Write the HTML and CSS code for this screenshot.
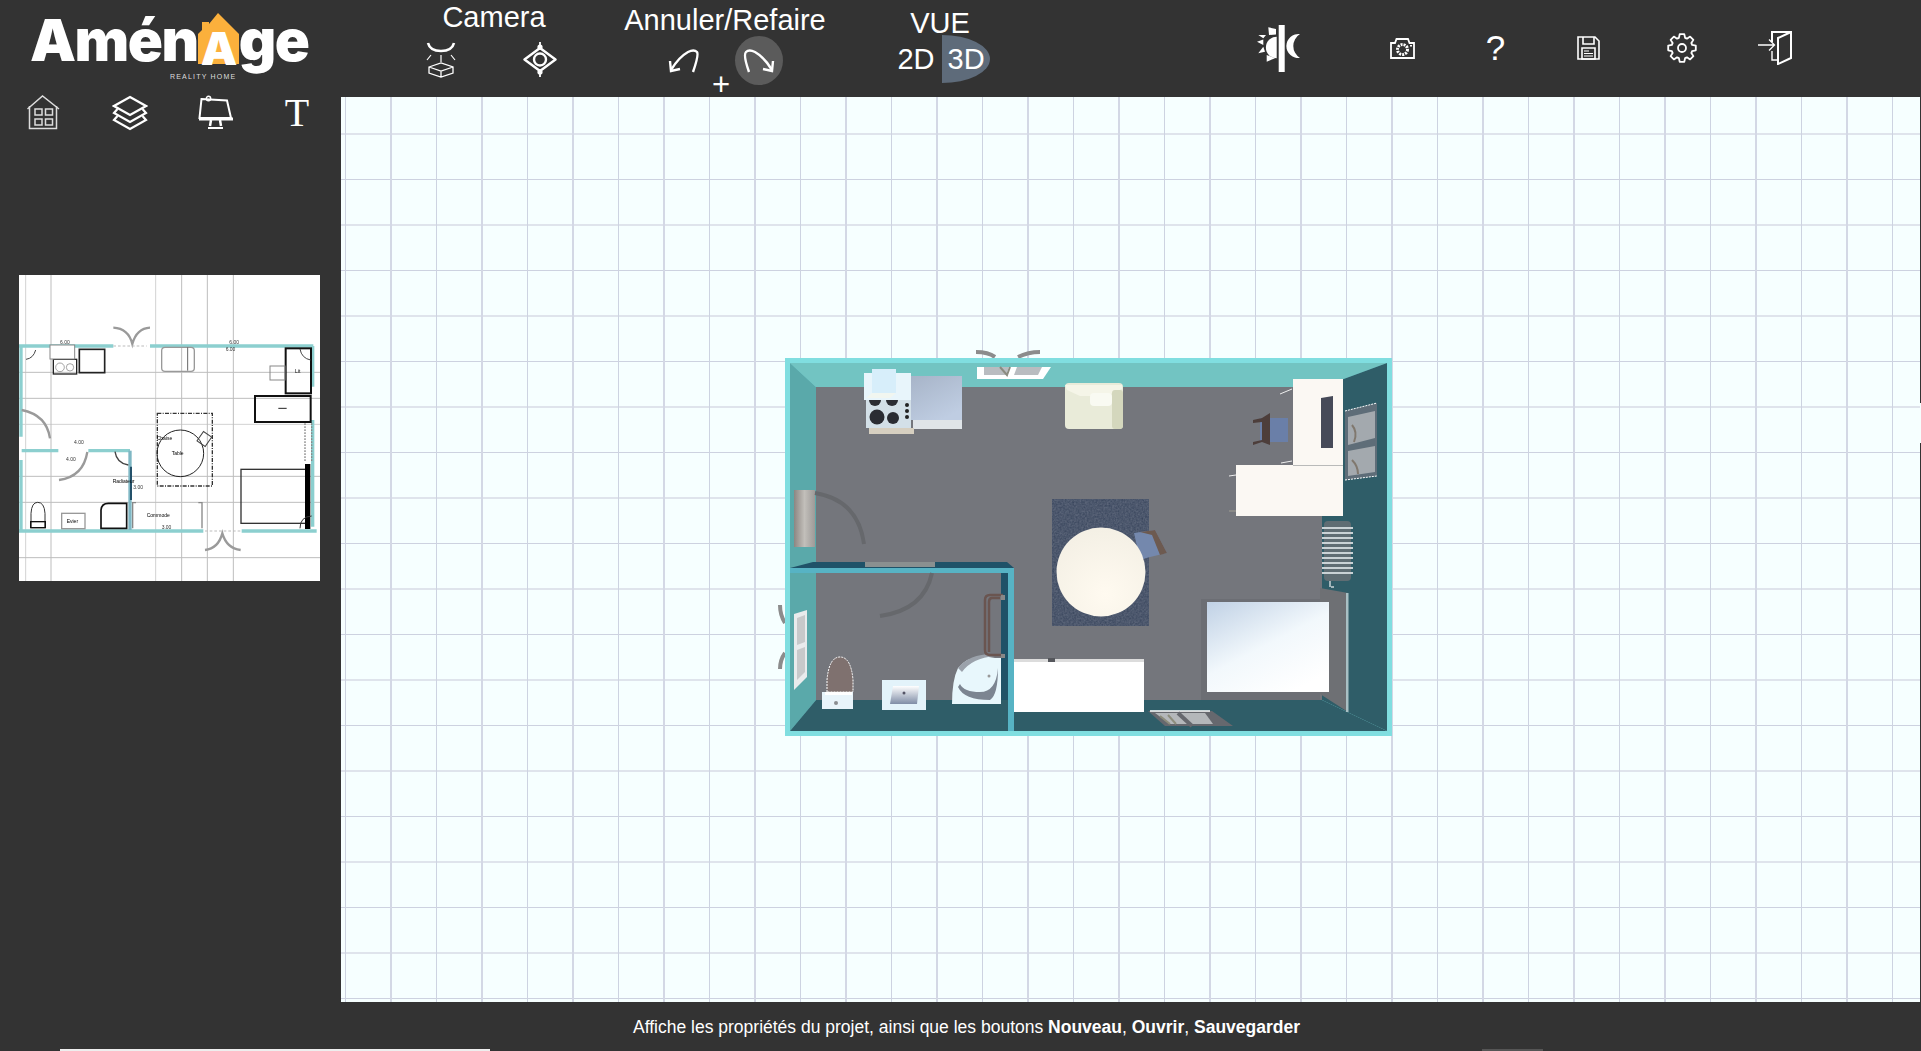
FILE: index.html
```html
<!DOCTYPE html>
<html lang="fr">
<head>
    <meta charset="UTF-8">
    <meta name="viewport" content="width=device-width, initial-scale=1.0">
    <title>AménAge</title>
    <link rel="stylesheet" href="styles.css">
</head>
<body>
    <header class="topbar">
        <div class="logo">
            <span class="logo-text">Amén</span>
            <span class="logo-house">
                <svg width="42" height="52" viewBox="200 14 42 52"><path d="M220 14 L241 35 V65 H200 V35 L204 31 V23 H211 V25Z" fill="#fbb03c"/></svg>
                <span class="logo-a">A</span>
            </span>
            <span class="logo-text">ge</span>
            <span class="logo-sub">REALITY HOME</span>
        </div>

        <div class="group group-camera">
            <div class="group-title">Camera</div>
            <div class="group-icons">
                <button class="icon-btn">
                    <svg width="32" height="36" viewBox="0 0 32 36" fill="none" stroke="#fff"><path d="M3 1 Q5 9 16 9 Q27 9 29 1" stroke-width="2.6"/><path d="M6 13 L2 18 M26 13 L30 18 M16 13 V20" stroke-width="1.2"/><path d="M4 25 L16 21 L28 25 V31 L16 35 L4 31Z M4 25 L16 29 L28 25 M16 29 V35" stroke-width="1.3"/></svg>
                </button>
                <button class="icon-btn">
                    <svg width="34" height="35" viewBox="0 0 34 35" fill="none" stroke="#fff"><path d="M1.5 17.5 L17 6 L32.500 17.5 L17 29Z" stroke-width="2.4" stroke-linejoin="round"/><circle cx="17" cy="17.5" r="6" stroke-width="2.4"/><path d="M17 0 V8 M17 27 V35" stroke-width="1.800"/><circle cx="17" cy="5" r="2.6" fill="#fff" stroke="none"/><circle cx="17" cy="30" r="2.6" fill="#fff" stroke="none"/></svg>
                </button>
            </div>
        </div>

        <div class="group group-undo">
            <div class="group-title">Annuler/Refaire</div>
            <div class="group-icons">
                <button class="icon-btn">
                    <svg width="32" height="24" viewBox="0 0 32 24" fill="none" stroke="#fff" stroke-width="2.4"><path d="M25 23 Q31 6 29 3 Q26 0 20 3 Q11 8 3 21"/><path d="M2 12 L3 22 L12 20"/></svg>
                </button>
                <span class="plus">+</span>
                <button class="icon-btn icon-active">
                    <svg width="32" height="24" viewBox="0 0 32 24" fill="none" stroke="#fff" stroke-width="2.4"><path d="M6 23 Q0 6 3 3 Q6 0 12 3 Q21 8 29 21"/><path d="M30 12 L29 22 L20 20"/></svg>
                </button>
            </div>
        </div>

        <div class="group group-view">
            <div class="group-title">VUE</div>
            <div class="view-switch">
                <span class="view-2d">2D</span>
                <span class="view-3d">3D</span>
            </div>
        </div>

        <div class="tools">
            <button class="tool tool-theme">
                <svg width="46" height="47" viewBox="-1 0 46 47" fill="#fff"><rect x="21.700" y="0" width="6" height="47"/><path d="M19.700 11.700 A10.800 10.800 0 0 0 19.700 33.300Z"/><path d="M11.300 2.300 L19 4 V9.500 L12 10Z M1.300 10 L6.300 13.300 L9 10Z M0 16.700 L6.300 14.500 V20Z M1.300 28.300 L6.300 21.700 L8 26.700Z M9.700 36.700 V30 L18 33.300Z"/><path d="M43 9 A12.100 12.100 0 1 0 43 33 A14.100 14.100 0 0 1 43 9Z"/></svg>
            </button>
            <button class="tool">
                <svg width="25" height="21" viewBox="0 0 25 21" fill="none" stroke="#fff"><path d="M1 5 H5 L6.500 1 H18 L19.500 5 H24 V20 H1Z" stroke-width="1.800"/><circle cx="12.500" cy="11.500" r="5" stroke-width="3" stroke-dasharray="2 1"/><rect x="20" y="7" width="2" height="1.500" fill="#fff" stroke="none"/></svg>
            </button>
            <button class="tool tool-help">?</button>
            <button class="tool">
                <svg width="23" height="24" viewBox="0 0 23 24" fill="none" stroke="#fff" stroke-width="1.600"><path d="M1 1 H18 L22 5 V23 H1Z"/><path d="M6 1 V8 H17 V1"/><path d="M5 12 H18 V23 H5Z"/><path d="M7 15 H12 M7 17.500 H16 M7 20 H16" stroke-width="1.200"/></svg>
            </button>
            <button class="tool">
                <svg width="30" height="30" viewBox="-15 -15 30 30" fill="none" stroke="#fff" stroke-width="1.800" stroke-linejoin="round">
                    <defs><path id="tooth" d="M-4.200 -9.700 L-3.100 -10.100 L-2.300 -13.800 L2.300 -13.800 L3.100 -10.100 L4.200 -9.700"/></defs>
                    <use href="#tooth"/>
                    <use href="#tooth" transform="rotate(45)"/>
                    <use href="#tooth" transform="rotate(90)"/>
                    <use href="#tooth" transform="rotate(135)"/>
                    <use href="#tooth" transform="rotate(180)"/>
                    <use href="#tooth" transform="rotate(225)"/>
                    <use href="#tooth" transform="rotate(270)"/>
                    <use href="#tooth" transform="rotate(315)"/>
                    <circle r="4"/>
                </svg>
            </button>
            <button class="tool">
                <svg width="34" height="34" viewBox="0 0 34 34" fill="none" stroke="#fff"><path d="M14 11 V1 H33 V27 L20 33 V7 L33 1" stroke-width="2"/><path d="M14 20 V29 H20" stroke-width="1.400"/><path d="M0 14 H16 M11 8.500 L16.500 14 L11 19.500" stroke-width="1.300"/></svg>
            </button>
        </div>
    </header>

    <div class="main">
        <aside class="sidebar">
            <div class="side-tools">
                <button class="side-btn">
                    <svg width="36" height="36" viewBox="0 0 36 36" fill="none" stroke="#ddd" stroke-width="1.500"><path d="M1.500 14 L16.500 1 L33 14"/><path d="M3.500 11 V33.500 H30.500 V11"/><rect x="9" y="14" width="7" height="6"/><rect x="19.500" y="14" width="7" height="6"/><rect x="9" y="24" width="7" height="6"/><rect x="19.500" y="24" width="7" height="6"/></svg>
                </button>
                <button class="side-btn">
                    <svg width="36" height="36" viewBox="0 0 36 36" fill="none" stroke="#fff" stroke-width="2.200"><path d="M18 2 L34 11 L18 20 L2 11Z"/><path d="M5.500 14 L2 18 L18 27 L34 18 L30.500 14"/><path d="M5.500 21 L2 25 L18 34 L34 25 L30.500 21"/></svg>
                </button>
                <button class="side-btn">
                    <svg width="36" height="36" viewBox="0 0 36 36" fill="none" stroke="#fff"><path d="M3.500 4 L29 5.500 L33 23 H1.500 Z" stroke-width="2"/><path d="M1 24 H35" stroke-width="3"/><path d="M13 25 L12 31 M22 25 L23 31" stroke-width="2.500"/><path d="M10 33 H25" stroke-width="2"/><circle cx="10.500" cy="3.500" r="2.200" stroke-width="1.400"/></svg>
                </button>
                <button class="side-btn side-text">T</button>
            </div>

            <div class="thumb">
                <svg class="thumb-plan" width="301" height="306" viewBox="57 45 903 918" fill="none">
                    <!-- lignes de la grille -->
                    <g stroke="#d2d2d2" stroke-width="3">
                        <path d="M77 45 V963 M467 45 V963 M57 493 H960"/>
                    </g>
                    <g stroke="#bdbdbd" stroke-width="3">
                        <path d="M153 45 V963 M545 45 V963 M622 45 V963 M700 45 V963 M57 337 H960 M57 415 H960 M57 649 H960 M57 727 H960 M57 893 H960"/>
                    </g>
                    <!-- murs -->
                    <g stroke="#8ccfcf" stroke-width="10">
                        <path d="M57 258 H340 M450 258 H940 M63 258 V530 M63 600 V812 M57 813 H610 M725 813 H950 M938 258 V380 M938 480 V800"/>
                        <path d="M65 572 H175 M265 572 H390"/>
                    </g>
                    <path d="M390 572 V810" stroke="#7fb7c4" stroke-width="10"/>
                    <path d="M393 620 V720" stroke="#24516a" stroke-width="6"/>
                    <!-- portes -->
                    <g stroke="#9a9a9a" stroke-width="7">
                        <path d="M340 203 Q385 205 397 252 Q410 205 450 203"/>
                        <path d="M615 870 Q655 865 667 820 Q680 865 722 870"/>
                        <path d="M65 450 Q140 465 150 535"/>
                        <path d="M262 576 Q250 650 177 660"/>
                    </g>
                    <path d="M340 258 H440 M615 813 H722" stroke="#bbb" stroke-width="3" stroke-dasharray="8 6"/>
                    <!-- cuisine -->
                    <rect x="160" y="298" width="70" height="44" stroke="#222" stroke-width="4"/>
                    <circle cx="180" cy="322" r="13" stroke="#777" stroke-width="2"/>
                    <circle cx="210" cy="322" r="11" stroke="#777" stroke-width="2"/>
                    <rect x="150" y="255" width="74" height="42" fill="#fff" stroke="#888" stroke-width="3"/>
                    <rect x="238" y="268" width="76" height="70" stroke="#222" stroke-width="5"/>
                    <!-- fauteuil -->
                    <rect x="485" y="262" width="98" height="72" rx="10" stroke="#999" stroke-width="4"/>
                    <path d="M563 262 V332" stroke="#666" stroke-width="3"/>
                    <!-- bureau -->
                    <rect x="857" y="265" width="76" height="135" stroke="#111" stroke-width="6"/>
                    <rect x="765" y="408" width="167" height="78" stroke="#111" stroke-width="6"/>
                    <rect x="810" y="318" width="45" height="42" stroke="#888" stroke-width="3"/>
                    <path d="M835 445 H860" stroke="#222" stroke-width="3"/>
                    <path d="M915 490 V605 M935 490 V605" stroke="#888" stroke-width="4" stroke-dasharray="5 4"/>
                    <!-- table et tapis -->
                    <rect x="472" y="460" width="165" height="218" stroke="#333" stroke-width="4" stroke-dasharray="12 4 3 4"/>
                    <circle cx="541" cy="580" r="70" stroke="#222" stroke-width="3"/>
                    <rect x="598" y="520" width="30" height="34" transform="rotate(35 613 537)" stroke="#444" stroke-width="3"/>
                    <!-- lit -->
                    <rect x="723" y="628" width="195" height="162" stroke="#333" stroke-width="4"/>
                    <rect x="915" y="612" width="16" height="195" fill="#000"/>
                    <!-- commode -->
                    <path d="M408 728 H398 V805 M595 728 H606 V805" stroke="#888" stroke-width="4"/>
                    <!-- salle de bain -->
                    <path d="M303 805 V750 Q305 730 325 730 H380 V805Z" stroke="#111" stroke-width="5"/>
                    <rect x="185" y="760" width="70" height="46" stroke="#999" stroke-width="4"/>
                    <path d="M93 803 V760 Q95 727 113 727 Q133 727 135 760 V803Z" stroke="#333" stroke-width="3"/>
                    <rect x="92" y="785" width="44" height="18" stroke="#111" stroke-width="4"/>
                    <path d="M345 575 Q350 610 385 615" stroke="#444" stroke-width="4"/>
                    <path d="M900 805 Q900 770 935 768" stroke="#333" stroke-width="3"/>
                    <path d="M900 267 Q905 295 932 300 M78 298 Q100 295 107 270" stroke="#444" stroke-width="3"/>
                    <!-- cotes -->
                    <g font-family="Liberation Sans, Arial, sans-serif" font-size="15" fill="#333">
                        <text x="180" y="252">6.00</text>
                        <text x="688" y="252">6.00</text>
                        <text x="677" y="274">6.00</text>
                        <text x="222" y="552">4.00</text>
                        <text x="198" y="602">4.00</text>
                        <text x="485" y="808">3.00</text>
                        <text x="400" y="686">3.00</text>
                        <text x="515" y="585" fill="#000">Table</text>
                        <text x="470" y="540" fill="#000">Chaise</text>
                        <text x="440" y="772" fill="#000">Commode</text>
                        <text x="338" y="668" fill="#000">Radiateur</text>
                        <text x="885" y="340" fill="#000">Lit</text>
                        <text x="200" y="790" fill="#000">Evier</text>
                    </g>
                </svg>
            </div>
        </aside>

        <section class="canvas">
            <svg class="plan" width="650" height="410" viewBox="770 340 650 410">
                <defs>
                    <filter id="grain" x="0" y="0" width="100%" height="100%" color-interpolation-filters="sRGB">
                        <feTurbulence type="fractalNoise" baseFrequency="0.55" numOctaves="2" seed="4"/>
                        <feColorMatrix values="0 0 0 0 0.22  0 0 0 0 0.27  0 0 0 0 0.36  1.4 0 0 0 -0.3"/>
                        <feComposite in2="SourceGraphic" operator="in" result="noise"/>
                        <feMerge><feMergeNode in="SourceGraphic"/><feMergeNode in="noise"/></feMerge>
                    </filter>
                    <linearGradient id="fridge" x1="0" y1="0" x2="0.6" y2="1"><stop offset="0" stop-color="#a7b4c8"/><stop offset="1" stop-color="#bfcde2"/></linearGradient>
                    <linearGradient id="mattress" x1="0" y1="0" x2="0.7" y2="1"><stop offset="0" stop-color="#c0d1e5"/><stop offset="0.55" stop-color="#f2f8fc"/><stop offset="1" stop-color="#fff"/></linearGradient>
                    <linearGradient id="sinkbowl" x1="0" y1="0" x2="0" y2="1"><stop offset="0" stop-color="#fff"/><stop offset="1" stop-color="#7f8da6"/></linearGradient>
                    <linearGradient id="doorgrey" x1="0" y1="0" x2="1" y2="0"><stop offset="0" stop-color="#8d8682"/><stop offset="0.5" stop-color="#c2bfba"/><stop offset="1" stop-color="#9d9a98"/></linearGradient>
                    <radialGradient id="tabletop" cx="0.55" cy="0.75" r="0.8"><stop offset="0" stop-color="#fffaf0"/><stop offset="1" stop-color="#f3efe4"/></radialGradient>
                </defs>

                <!-- portes qui depassent du mur -->
                <g fill="none" stroke="#8c8c8c" stroke-width="4">
                    <path d="M976 352 Q988 352 995 357 M1040 352 Q1028 352 1018 357"/>
                    <path d="M780 605 Q780 615 785 623 M780 669 Q780 660 785 653"/>
                </g>

                <!-- murs -->
                <rect x="785" y="358" width="607" height="378" fill="#80dee0"/>
                <path d="M790 363 H1387 L1322 387 H816Z" fill="#72c4c2"/>
                <path d="M790 363 L816 387 V700 L790 731Z" fill="#5aa9aa"/>
                <path d="M790 731 L816 700 H1322 L1387 731Z" fill="#2f5d68"/>
                <path d="M1387 363 L1322 387 V700 L1387 731Z" fill="#2f5d68"/>
                <rect x="816" y="387" width="506" height="313" fill="#74767c"/>

                <!-- cloison salle de bain -->
                <path d="M790 568 L813 562 H1007 L1014 568Z" fill="#1f5268"/>
                <rect x="865" y="562" width="70" height="5" fill="#8a9090"/>
                <rect x="790" y="568" width="224" height="5" fill="#57b3c4"/>
                <rect x="790" y="573" width="26" height="127" fill="#5aa9aa"/>
                <rect x="1001" y="573" width="7" height="127" fill="#1f5268"/>
                <rect x="1001" y="700" width="7" height="31" fill="#2f5d68"/>
                <rect x="1008" y="573" width="6" height="158" fill="#57b3c4"/>

                <!-- cuisine -->
                <rect x="911" y="376" width="51" height="44" fill="url(#fridge)"/>
                <rect x="913" y="420" width="49" height="9" fill="#dfe4e8"/>
                <rect x="869" y="428" width="45" height="6" fill="#d6cfc0"/>
                <rect x="866" y="400" width="45" height="28" fill="#d3e0e8"/>
                <circle cx="875" cy="400" r="6" fill="#2b2d33"/>
                <circle cx="892" cy="400" r="6" fill="#2b2d33"/>
                <circle cx="877" cy="417" r="7.500" fill="#2a2c33"/>
                <circle cx="893" cy="418" r="6" fill="#2a2c33"/>
                <circle cx="907" cy="405" r="2" fill="#222"/>
                <circle cx="907" cy="411" r="2" fill="#222"/>
                <circle cx="907" cy="417" r="2" fill="#222"/>
                <rect x="864" y="373" width="47" height="27" fill="#e8f5fb"/>
                <rect x="872" y="369" width="24" height="24" fill="#d7eefa"/>
                <path d="M872 393 H896 L890 398 H866Z" fill="#f1f6f0"/>

                <!-- fenetre du haut -->
                <path d="M977 367 H1051 L1043 379 H977Z" fill="#fff"/>
                <path d="M984 367 H1009 L1006 375 H984Z M1017 367 H1042 L1038 375 H1014Z" fill="#b9bcc0"/>
                <path d="M1000 367 L1007 375 L1010 367" fill="none" stroke="#8b8b80" stroke-width="2"/>

                <!-- fauteuil -->
                <rect x="1065" y="383" width="58" height="46" rx="4" fill="#e9ebd9"/>
                <path d="M1065 385 H1122 V389 L1106 396 H1080 L1067 390Z" fill="#f5f5e8"/>
                <rect x="1090" y="393" width="22" height="13" rx="4" fill="#f9faf2"/>
                <rect x="1112" y="390" width="11" height="39" rx="3" fill="#d4d7bd"/>

                <!-- porte entree et arcs -->
                <rect x="794" y="490" width="21" height="57" fill="url(#doorgrey)"/>
                <path d="M815 493 Q858 500 864 544" fill="none" stroke="#66686c" stroke-width="4"/>
                <path d="M932 573 Q924 610 880 616" fill="none" stroke="#66686c" stroke-width="4"/>

                <!-- tapis et table -->
                <rect x="1052" y="499" width="97" height="127" fill="#5a6478" filter="url(#grain)"/>
                <path d="M1134 533 L1155 530 L1167 553 L1150 557 L1140 560Z" fill="#7488ad"/>
                <path d="M1140 532 L1155 530 L1167 553 L1160 555 L1152 535Z" fill="#6d5a50"/>
                <circle cx="1101" cy="572" r="44.500" fill="url(#tabletop)"/>

                <!-- bureau -->
                <rect x="1293" y="379" width="50" height="86" fill="#fbf8f3"/>
                <rect x="1236" y="465" width="107" height="51" fill="#fbf8f3"/>
                <rect x="1293" y="465" width="50" height="1" fill="#b9bab9"/>
                <path d="M1321 398 L1333 396 V448 L1321 448Z" fill="#464a58"/>
                <rect x="1260" y="418" width="28" height="24" fill="#6a7fa8"/>
                <path d="M1253 420 L1262 418 L1270 413 V445 L1262 442 L1253 445 V442 L1262 440 V422 L1253 423Z" fill="#4d3e3b"/>
                <path d="M1280 394 L1292 389 M1281 463 L1292 461 M1229 476 L1236 475" stroke="#eee" stroke-width="1"/>
                <path d="M1229 511 H1236" stroke="#8a8a88" stroke-width="2"/>

                <!-- fenetre droite -->
                <path d="M1345 411 L1377 403 V476 L1345 480Z" fill="#5e6d78"/>
                <path d="M1348 417 L1375 411 V438 L1348 445Z M1348 451 L1375 446 V472 L1348 476Z" fill="#a3a9ae"/>
                <path d="M1345 411 L1377 403 M1345 480 L1377 476" stroke="#fff" stroke-width="1" stroke-dasharray="2 1"/>
                <path d="M1352 425 Q1358 432 1354 442 M1352 460 Q1358 466 1358 474" fill="none" stroke="#80786e" stroke-width="2"/>

                <!-- radiateur -->
                <g>
                    <rect x="1324" y="521" width="27" height="60" rx="4" fill="#5f6d73"/>
                    <path d="M1322 528 H1353 M1322 533 H1353 M1322 538 H1353 M1322 543 H1353 M1322 548 H1353 M1322 553 H1353 M1322 558 H1353 M1322 563 H1353 M1322 568 H1353 M1322 573 H1353" stroke="#c9d2d5" stroke-width="2"/>
                    <path d="M1330 581 V587 M1331 587 H1334" stroke="#c9d2d5" stroke-width="1.500"/>
                </g>

                <!-- lit -->
                <rect x="1201" y="599" width="119" height="101" fill="#6c6e74"/>
                <path d="M1320 588 L1348 593 V712 L1320 694Z" fill="#6e7074"/>
                <rect x="1346" y="593" width="2.500" height="119" fill="#a9c0c4"/>
                <rect x="1207" y="602" width="122" height="90" fill="url(#mattress)"/>

                <!-- commode -->
                <rect x="1014" y="659" width="130" height="3" fill="#dcdcdc"/>
                <rect x="1014" y="662" width="130" height="50" fill="#fff"/>
                <rect x="1048" y="658" width="7" height="4" fill="#55575c"/>

                <!-- fenetre du bas -->
                <path d="M1148 711 H1212 L1233 726 H1165Z" fill="#66686e"/>
                <path d="M1155 713 H1205 L1213 724 H1170Z" fill="#b4b7ba"/>
                <path d="M1150 711 H1210" stroke="#fff" stroke-width="1.500"/>
                <path d="M1178 713 L1192 726" stroke="#66686e" stroke-width="4"/>
                <path d="M1160 716 L1170 724 M1168 715 L1176 724" stroke="#8d8d7c" stroke-width="2"/>

                <!-- salle de bain -->
                <path d="M794 614 L807 610 V677 L794 690Z" fill="#e9ebec"/>
                <path d="M797 618 L805 615 V642 L797 645Z M797 650 L805 647 V672 L797 680Z" fill="#c7c9ca"/>
                <path d="M827 692 V680 Q829 657 840 657 Q851 657 853 680 V692Z" fill="#7f716f" stroke="#fff" stroke-width="1" stroke-dasharray="2 1"/>
                <rect x="822" y="692" width="31" height="17" fill="#e8f4fa"/>
                <rect x="825" y="692" width="27" height="3" fill="#fff"/>
                <circle cx="836" cy="703" r="2" fill="#8a8d90"/>
                <rect x="882" y="680" width="44" height="30" fill="#e3f3fa"/>
                <path d="M893 686 H919 L917 704 H890Z" fill="url(#sinkbowl)"/>
                <circle cx="904" cy="693" r="1.500" fill="#556"/>
                <path d="M1001 658 H995 Q970 653 958 668 Q952 680 952 704 H1001Z" fill="#e8f7fc"/>
                <path d="M958 668 Q970 653 995 654 V656 Q972 658 962 672Z" fill="#9ba2ab"/>
                <path d="M958 687 Q964 700 990 700 Q998 695 998 668 Q996 692 980 692 Q964 692 960 684Z" fill="#7c8591"/>
                <circle cx="989" cy="676" r="1.500" fill="#999"/>
                <path d="M1003 595 H990 Q985 595 985 600 V650 Q985 655 990 655 H1003 M1000 598 H992 Q989 598 989 602 V652" fill="none" stroke="#6a5550" stroke-width="2.500"/>
                <rect x="1001" y="595" width="4" height="5" fill="#888"/>
                <rect x="1001" y="654" width="4" height="4" fill="#888"/>
            </svg>
            <span class="edge-notch"></span>
        </section>
    </div>

    <footer class="status">
        <p class="status-text">Affiche les propriétés du projet, ainsi que les boutons <b>Nouveau</b>, <b>Ouvrir</b>, <b>Sauvegarder</b></p>
        <div class="status-strip">
            <span class="strip-light"></span>
            <span class="strip-dark"></span>
        </div>
    </footer>
</body>
</html>
```

FILE: styles.css
```css
body {
    margin: 0;
    width: 1921px;
    height: 1051px;
    overflow: hidden;
    background-color: #333333;
    color: #fff;
    font-family: "Liberation Sans", Arial, sans-serif;
}
button {
    padding: 0;
    border: none;
    background: none;
    color: #fff;
    font-family: inherit;
}
svg {
    display: block;
}

/* barre du haut */
.topbar {
    display: flex;
    height: 97px;
}
.logo {
    position: relative;
    display: flex;
    align-items: flex-end;
    box-sizing: border-box;
    width: 341px;
    height: 80px;
    padding-left: 30px;
    padding-bottom: 15px;
    flex-shrink: 0;
}
.logo-text {
    font-family: Inter, "Liberation Sans", sans-serif;
    font-size: 58px;
    font-weight: 900;
    line-height: 50px;
    letter-spacing: -1.5px;
}
.logo-house {
    position: relative;
    display: block;
    width: 41px;
    height: 51px;
    flex-shrink: 0;
}
.logo-house svg {
    position: absolute;
    left: 0;
    bottom: 0;
}
.logo-a {
    position: absolute;
    left: 3px;
    bottom: 0;
    font-family: Inter, "Liberation Sans", sans-serif;
    font-size: 46px;
    font-weight: 900;
    line-height: 34px;
}
.logo-sub {
    position: absolute;
    left: 170px;
    top: 73px;
    font-size: 7px;
    line-height: 8px;
    letter-spacing: 1.2px;
    color: #ddd;
}

.group {
    display: flex;
    flex-direction: column;
    align-items: center;
    flex-shrink: 0;
}
.group-title {
    font-size: 29px;
    line-height: 34px;
}
.group-icons {
    display: flex;
    align-items: center;
    justify-content: center;
}
.icon-btn {
    display: flex;
    align-items: center;
    justify-content: center;
    width: 48px;
    height: 49px;
    border-radius: 50%;
}
.icon-active {
    background-color: #5b5b5b;
}

.group-camera {
    width: 160px;
    margin-left: 73px;
}
.group-camera .group-icons {
    gap: 51px;
    margin-top: 1px;
    margin-left: -7px;
}
.group-undo {
    width: 220px;
    margin-left: 41px;
    padding-top: 3px;
}
.group-undo .group-icons {
    margin-top: -1px;
    margin-left: -8px;
}
.plus {
    width: 27px;
    align-self: flex-end;
    margin-bottom: -15px;
    text-align: center;
    font-size: 31px;
    line-height: 31px;
}
.group-view {
    width: 100px;
    margin-left: 55px;
    padding-top: 6px;
}
.view-switch {
    display: flex;
    align-items: center;
    height: 48px;
    margin-top: -5px;
    font-size: 29px;
}
.view-2d {
    width: 51px;
    text-align: center;
}
.view-3d {
    box-sizing: border-box;
    width: 48px;
    height: 48px;
    padding-left: 6px;
    line-height: 48px;
    background-color: #5e6b7a;
    border-radius: 0 100% 100% 0 / 0 50% 50% 0;
}

.tools {
    display: flex;
    align-items: center;
    margin-left: 242px;
    height: 97px;
}
.tool {
    display: flex;
    align-items: center;
    justify-content: center;
    width: 93px;
    height: 48px;
    margin-top: -1px;
}
.tool-theme {
    margin-right: 31px;
}
.tool-help {
    font-size: 35px;
    line-height: 48px;
}

/* partie centrale */
.main {
    display: flex;
    height: 905px;
}
.sidebar {
    width: 341px;
    flex-shrink: 0;
}
.side-tools {
    display: flex;
    margin-top: -2px;
    padding-left: 26px;
}
.side-btn {
    display: flex;
    align-items: center;
    justify-content: center;
    width: 36px;
    height: 36px;
    margin-right: 50px;
}
.side-text {
    margin-right: 0;
    margin-left: -5px;
    font-family: "Liberation Serif", serif;
    font-size: 40px;
    line-height: 36px;
}
.thumb {
    width: 301px;
    height: 306px;
    margin-top: 144px;
    margin-left: 19px;
    background-color: #fff;
}
.thumb-plan {
    filter: blur(0.4px);
}

.canvas {
    position: relative;
    width: 1579px;
    height: 905px;
    background-color: #f6ffff;
    background-image:
        linear-gradient(to right, #cdd3e1 1px, transparent 1px),
        linear-gradient(to right, #d3d8e5 2px, transparent 2px),
        linear-gradient(to bottom, #dfe4ec 2px, transparent 2px),
        linear-gradient(to bottom, #cdd2e0 1px, transparent 1px);
    background-size: 91px 100%, 91px 100%, 100% 91px, 100% 91px;
    background-position: 4px 0, 49px 0, 0 36px, 0 82px;
}
.plan {
    position: absolute;
    left: 429px;
    top: 243px;
}
.edge-notch {
    position: absolute;
    top: 306px;
    left: 1579px;
    width: 1px;
    height: 40px;
    background-color: #f6ffff;
}

/* barre d'etat */
.status {
    height: 49px;
}
.status-text {
    height: 47px;
    margin: 0;
    padding-left: 633px;
    font-size: 17.5px;
    line-height: 50px;
}
.status-strip {
    display: flex;
    height: 2px;
    padding-left: 60px;
}
.strip-light {
    width: 430px;
    background-color: #eeeeee;
}
.strip-dark {
    width: 61px;
    margin-left: 992px;
    background-color: #555555;
}
```
